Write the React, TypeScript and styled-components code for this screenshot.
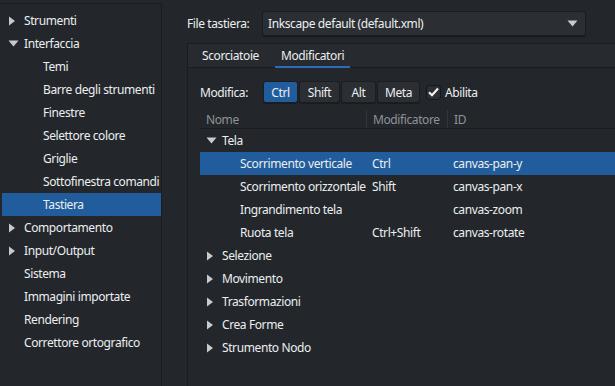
import styled, { createGlobalStyle } from 'styled-components';

const GlobalStyle = createGlobalStyle`
  html, body {
    margin: 0;
    padding: 0;
    background: #23272b;
  }
  body {
    font-family: 'Noto Sans', 'Open Sans', sans-serif;
    font-size: 12px;
    letter-spacing: -0.4px;
    color: #eceef0;
    overflow: hidden;
  }
`;

const Window = styled.div`
  display: flex;
  width: 615px;
  height: 386px;
  background: #23272b;
  overflow: hidden;
`;

const SidePanel = styled.div`
  width: 161px;
  margin-top: 3px;
  border-top: 1px solid #1a1d20;
  border-right: 1px solid #1a1d20;
  padding-top: 5px;
  flex-shrink: 0;
`;

const SideRow = styled.div<{ $depth: number; $selected?: boolean }>`
  display: flex;
  align-items: center;
  height: 23px;
  margin-left: 2px;
  padding-left: ${(p) => 6 + p.$depth * 19}px;
  background: ${(p) => (p.$selected ? '#215d9c' : 'transparent')};
  white-space: nowrap;
`;

const Expander = styled.span`
  display: inline-flex;
  flex-shrink: 0;
  width: 16px;
  justify-content: flex-start;
  align-items: center;
`;

const Main = styled.div`
  flex: 1;
  display: flex;
  flex-direction: column;
  padding-left: 25px;
  min-width: 0;
`;

const FileRow = styled.div`
  display: flex;
  align-items: center;
  height: 26px;
  margin-top: 10px;
  margin-bottom: 7px;
`;

const Label = styled.span`
  width: 75px;
  flex-shrink: 0;
  white-space: nowrap;
`;

const Combo = styled.div`
  display: flex;
  align-items: center;
  justify-content: space-between;
  width: 324px;
  height: 25px;
  padding: 0 7px 0 5px;
  box-sizing: border-box;
  background: #2b2f33;
  border: 1px solid #1b1e21;
  border-radius: 3px;
  box-shadow: 0 1px 1px rgba(0, 0, 0, 0.35);
`;

const Notebook = styled.div`
  flex: 1;
  display: flex;
  flex-direction: column;
  border-left: 1px solid #1a1d20;
  border-top: 1px solid #1a1d20;
`;

const TabBar = styled.div`
  display: flex;
  height: 23px;
  background: #272b2f;
  border-bottom: 1px solid #1a1d20;
  padding-left: 8px;
`;

const Tab = styled.div<{ $active?: boolean }>`
  display: flex;
  align-items: center;
  padding: 0 6px;
  margin-right: 10px;
  border-bottom: 2px solid ${(p) => (p.$active ? '#2f6bb5' : 'transparent')};
  margin-bottom: -1px;
`;

const Page = styled.div`
  padding: 13px 0 0 12px;
  display: flex;
  flex-direction: column;
`;

const ModRow = styled.div`
  display: flex;
  align-items: center;
  height: 22px;
  margin-bottom: 7px;
`;

const ModLabel = styled.span`
  width: 63px;
  white-space: nowrap;
`;

const ToggleButton = styled.div<{ $active?: boolean; $w: number }>`
  display: flex;
  align-items: center;
  justify-content: center;
  width: ${(p) => p.$w}px;
  height: 22px;
  margin-right: 1px;
  box-sizing: border-box;
  border: 1px solid #1b1e21;
  border-radius: 3px;
  background: ${(p) => (p.$active ? '#215d9c' : '#2b2f33')};
  box-shadow: 0 1px 1px rgba(0, 0, 0, 0.3);
`;

const Check = styled.div`
  display: flex;
  align-items: center;
  margin-left: 5px;
  gap: 4px;
`;

const CheckBox = styled.span`
  display: inline-flex;
  align-items: center;
  justify-content: center;
  width: 15px;
  height: 15px;
  box-sizing: border-box;
  border: 1px solid #15181a;
  border-radius: 3px;
  background: #2b2f33;
`;

const Table = styled.div`
  display: flex;
  flex-direction: column;
`;

const HeaderRow = styled.div`
  display: grid;
  grid-template-columns: 167px 81px 1fr;
  height: 18px;
  border-bottom: 1px solid #1a1d20;
  color: #8d9399;
`;

const HeaderCell = styled.div<{ $sep?: boolean }>`
  display: flex;
  align-items: center;
  padding-left: 6px;
  border-right: ${(p) => (p.$sep ? '1px solid #32373c' : 'none')};
  white-space: nowrap;
`;

const Row = styled.div<{ $selected?: boolean }>`
  display: grid;
  grid-template-columns: 167px 81px 1fr;
  height: 23px;
  align-items: center;
  background: ${(p) => (p.$selected ? '#215d9c' : 'transparent')};
  white-space: nowrap;
`;

const NameCell = styled.div<{ $child?: boolean }>`
  display: flex;
  align-items: center;
  padding-left: ${(p) => (p.$child ? 40 : 6)}px;
`;

const Cell = styled.div`
  padding-left: 5px;
`;

const ArrowRight = () => (
  <svg width="8" height="10" viewBox="0 0 8 10">
    <path d="M1 0.5 L7 5 L1 9.5 Z" fill="#c8cbce" />
  </svg>
);

const ArrowDown = () => (
  <svg width="11" height="7" viewBox="0 0 11 7">
    <path d="M0.5 0.5 L10.5 0.5 L5.5 6.5 Z" fill="#c8cbce" />
  </svg>
);

type SideItem = { label: string; depth: number; open?: boolean; folder?: boolean; selected?: boolean };

const sideItems: SideItem[] = [
  { label: 'Strumenti', depth: 0, folder: true },
  { label: 'Interfaccia', depth: 0, folder: true, open: true },
  { label: 'Temi', depth: 1 },
  { label: 'Barre degli strumenti', depth: 1 },
  { label: 'Finestre', depth: 1 },
  { label: 'Selettore colore', depth: 1 },
  { label: 'Griglie', depth: 1 },
  { label: 'Sottofinestra comandi', depth: 1 },
  { label: 'Tastiera', depth: 1, selected: true },
  { label: 'Comportamento', depth: 0, folder: true },
  { label: 'Input/Output', depth: 0, folder: true },
  { label: 'Sistema', depth: 0 },
  { label: 'Immagini importate', depth: 0 },
  { label: 'Rendering', depth: 0 },
  { label: 'Correttore ortografico', depth: 0 },
];

const telaChildren = [
  { name: 'Scorrimento verticale', mod: 'Ctrl', id: 'canvas-pan-y', selected: true },
  { name: 'Scorrimento orizzontale', mod: 'Shift', id: 'canvas-pan-x' },
  { name: 'Ingrandimento tela', mod: '', id: 'canvas-zoom' },
  { name: 'Ruota tela', mod: 'Ctrl+Shift', id: 'canvas-rotate' },
];

const groups = ['Selezione', 'Movimento', 'Trasformazioni', 'Crea Forme', 'Strumento Nodo'];

const App = () => {
  return (
    <Window>
      <GlobalStyle />
      <SidePanel>
        {sideItems.map((it) => (
          <SideRow key={it.label} $depth={it.depth} $selected={it.selected}>
            <Expander>{it.folder ? it.open ? <ArrowDown /> : <ArrowRight /> : null}</Expander>
            {it.label}
          </SideRow>
        ))}
      </SidePanel>
      <Main>
        <FileRow>
          <Label>File tastiera:</Label>
          <Combo>
            <span>Inkscape default (default.xml)</span>
            <ArrowDown />
          </Combo>
        </FileRow>
        <Notebook>
          <TabBar>
            <Tab>Scorciatoie</Tab>
            <Tab $active>Modificatori</Tab>
          </TabBar>
          <Page>
            <ModRow>
              <ModLabel>Modifica:</ModLabel>
              <ToggleButton $active $w={35}>Ctrl</ToggleButton>
              <ToggleButton $w={41}>Shift</ToggleButton>
              <ToggleButton $w={35}>Alt</ToggleButton>
              <ToggleButton $w={43}>Meta</ToggleButton>
              <Check>
                <CheckBox>
                  <svg width="11" height="10" viewBox="0 0 11 10">
                    <path d="M1 5.2 L4 8.2 L10 1.5" stroke="#f2f2f2" strokeWidth="2.2" fill="none" />
                  </svg>
                </CheckBox>
                Abilita
              </Check>
            </ModRow>
            <Table>
              <HeaderRow>
                <HeaderCell $sep>Nome</HeaderCell>
                <HeaderCell $sep>Modificatore</HeaderCell>
                <HeaderCell>ID</HeaderCell>
              </HeaderRow>
              <Row>
                <NameCell>
                  <Expander>
                    <ArrowDown />
                  </Expander>
                  Tela
                </NameCell>
                <Cell />
                <Cell />
              </Row>
              {telaChildren.map((c) => (
                <Row key={c.id} $selected={c.selected}>
                  <NameCell $child>{c.name}</NameCell>
                  <Cell>{c.mod}</Cell>
                  <Cell>{c.id}</Cell>
                </Row>
              ))}
              {groups.map((g) => (
                <Row key={g}>
                  <NameCell>
                    <Expander>
                      <ArrowRight />
                    </Expander>
                    {g}
                  </NameCell>
                  <Cell />
                  <Cell />
                </Row>
              ))}
            </Table>
          </Page>
        </Notebook>
      </Main>
    </Window>
  );
};

export default App;
